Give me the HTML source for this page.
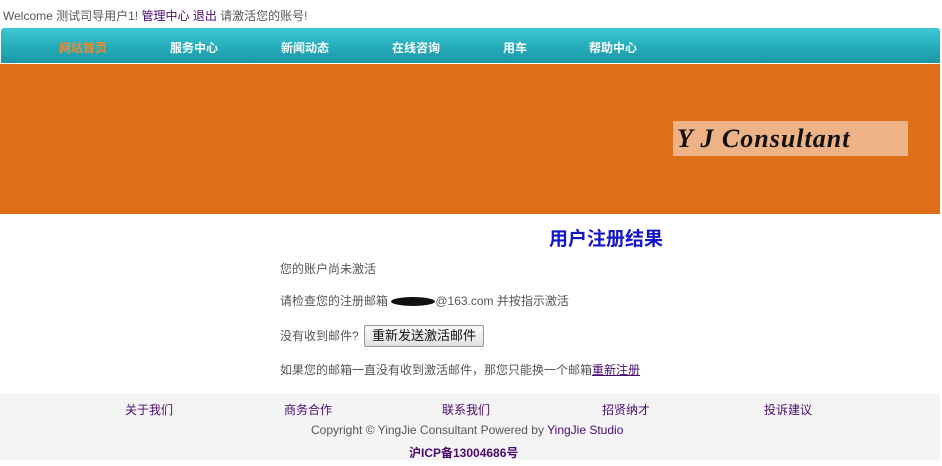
<!DOCTYPE html>
<html><head><meta charset="utf-8"><style>
body{margin:0;width:942px;height:466px;background:#fff;font-family:"Liberation Sans","Noto Sans CJK SC",sans-serif;font-size:12px;color:#555;position:relative;overflow:hidden}
.a{position:absolute;white-space:nowrap}
.p{color:#4b0a6e}
.nav{position:absolute;left:1px;top:28px;width:939px;height:35px;background:linear-gradient(#3ec7d3,#23aab8 60%,#1b97a5);border-radius:3px 3px 0 0}
.nav span{position:absolute;top:11px;color:#fff;font-weight:bold;font-size:12px}
.ban{position:absolute;left:0;top:64px;width:940px;height:150px;background:#dd6f18}
.logo{position:absolute;left:673px;top:121px;width:235px;height:35px;background:#eeb287;font-family:"Liberation Serif",serif;font-style:italic;font-weight:bold;font-size:26px;color:#111;line-height:35px;padding-left:4px;box-sizing:border-box;letter-spacing:1px}
.foot{position:absolute;left:0;top:394px;width:940px;height:66px;background:#f4f4f4}
</style></head><body>
<div class="a" style="left:3px;top:7px">Welcome 测试司导用户1! <span class="p">管理中心 退出</span> 请激活您的账号!</div>
<div class="nav">
<span style="left:58px;color:#f08a2c">网站首页</span>
<span style="left:169px">服务中心</span>
<span style="left:280px">新闻动态</span>
<span style="left:391px">在线咨询</span>
<span style="left:502px">用车</span>
<span style="left:588px">帮助中心</span>
</div>
<div class="ban"></div>
<div class="logo">Y J Consultant</div>
<div class="a" style="left:549px;top:224px;font-size:19px;font-weight:bold;color:#1515c8">用户注册结果</div>
<div class="a" style="left:280px;top:260px">您的账户尚未激活</div>
<div class="a" style="left:280px;top:292px">请检查您的注册邮箱 <span style="display:inline-block;width:44px;height:9px;background:#111;border-radius:50%;vertical-align:middle"></span>@163.com 并按指示激活</div>
<div class="a" style="left:280px;top:327px">没有收到邮件?</div>
<div class="a" style="left:364px;top:325px;width:118px;height:20px;border:1px solid #999;border-radius:2px;background:linear-gradient(#fafafa,#e2e2e2);color:#111;font-size:13px;text-align:center;line-height:20px">重新发送激活邮件</div>
<div class="a" style="left:280px;top:361px">如果您的邮箱一直没有收到激活邮件，那您只能换一个邮箱<span class="p" style="text-decoration:underline">重新注册</span></div>
<div class="foot"></div>
<div class="a p" style="left:125px;top:401px">关于我们</div>
<div class="a p" style="left:284px;top:401px">商务合作</div>
<div class="a p" style="left:442px;top:401px">联系我们</div>
<div class="a p" style="left:602px;top:401px">招贤纳才</div>
<div class="a p" style="left:764px;top:401px">投诉建议</div>
<div class="a" style="left:311px;top:423px">Copyright © YingJie Consultant Powered by <span class="p">YingJie Studio</span></div>
<div class="a p" style="left:409px;top:444px;font-weight:bold">沪ICP备13004686号</div>
</body></html>
